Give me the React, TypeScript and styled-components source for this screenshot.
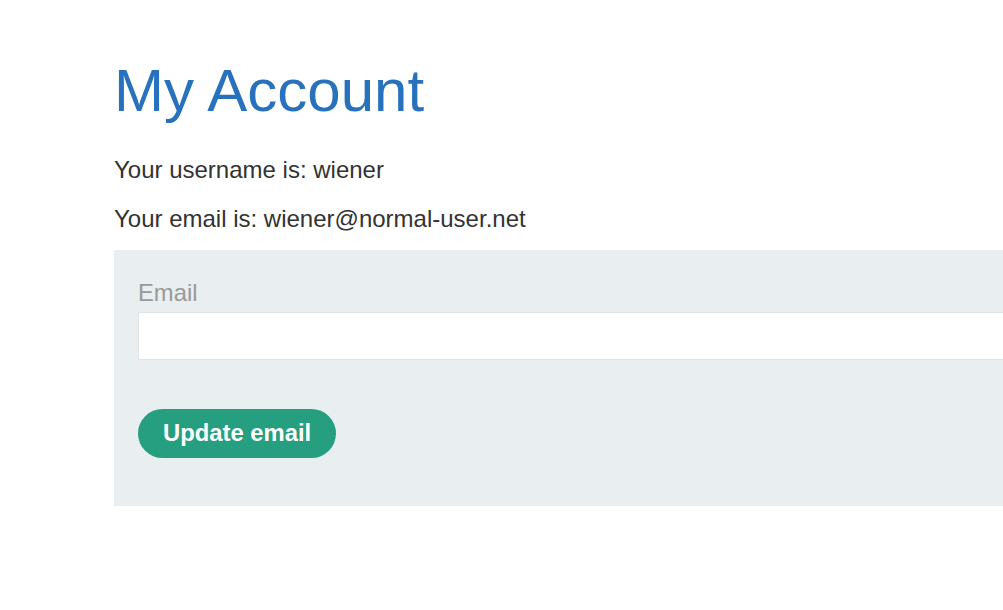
import styled, { createGlobalStyle } from 'styled-components'

const GlobalStyle = createGlobalStyle`
    html, body {
        margin: 0;
        padding: 0;
        background: #ffffff;
        overflow: hidden;
    }

    body {
        font-family: 'Liberation Sans', Arial, sans-serif;
        color: #333332;
    }
`

const Page = styled.div`
    width: 1003px;
    height: 610px;
    overflow: hidden;
    padding: 55px 0 0 114px;
    box-sizing: border-box;
`

const Title = styled.h1`
    margin: 0 0 26px;
    font-size: 60px;
    line-height: 1.2;
    font-weight: 400;
    color: #2771bd;
`

const Info = styled.p`
    margin: 0 0 15px;
    font-size: 24px;
    line-height: 1.4;
`

const FormPanel = styled.form`
    width: 960px;
    margin-top: -0.5px;
    padding: 26.5px 24px 48px;
    box-sizing: border-box;
    background: #e9eef1;
`

const Label = styled.label`
    display: block;
    margin-bottom: 2.5px;
    font-size: 23.8px;
    line-height: 1.4;
    color: #999999;
`

const TextInput = styled.input`
    display: block;
    width: 100%;
    height: 48px;
    margin: 0 0 49px;
    padding: 0 12px;
    box-sizing: border-box;
    border: 1px solid #e1e3e3;
    background: #ffffff;
    font-family: inherit;
    font-size: 23.8px;
    outline: none;
`

const Button = styled.button`
    display: block;
    height: 48.5px;
    padding: 0 25px;
    border: none;
    border-radius: 25px;
    background: #259f80;
    color: #ffffff;
    font-family: 'Liberation Sans', Arial, sans-serif;
    font-size: 23.8px;
    font-weight: 700;
    line-height: 1;
    cursor: pointer;
`

export default function App() {
    return (
        <>
            <GlobalStyle />
            <Page>
                <Title>My Account</Title>
                <Info>Your username is: wiener</Info>
                <Info>Your email is: wiener@normal-user.net</Info>
                <FormPanel onSubmit={e => e.preventDefault()}>
                    <Label htmlFor="email">Email</Label>
                    <TextInput id="email" name="email" type="email" />
                    <Button type="submit">Update email</Button>
                </FormPanel>
            </Page>
        </>
    )
}
